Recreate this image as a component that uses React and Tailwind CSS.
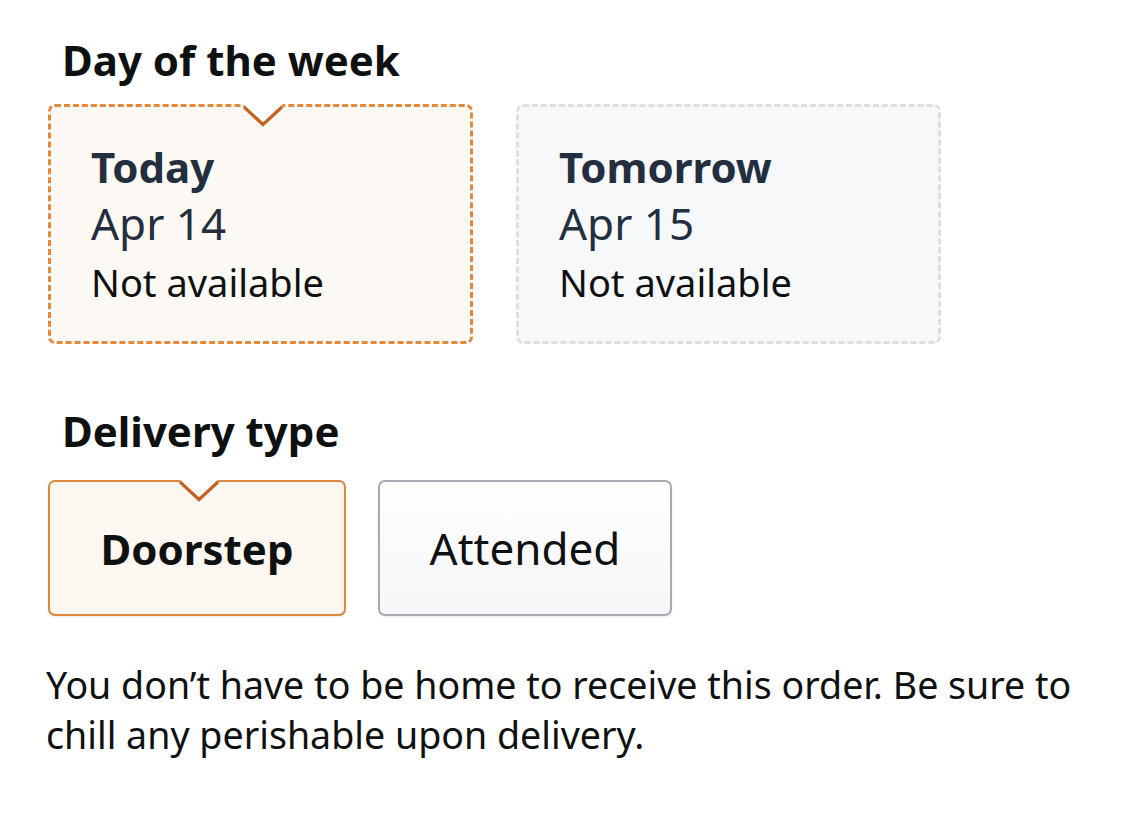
const Notch = ({ color = "#c4621f" }) => (
  <svg
    className="absolute left-[calc(50%+2px)] -translate-x-1/2 top-[-3px]"
    width="40"
    height="23"
    viewBox="0 0 40 23"
  >
    <polygon points="0,0 40,0 20,20" fill="#ffffff" />
    <polyline points="1,3 20,20.5 39,3" fill="none" stroke={color} strokeWidth="3.2" strokeLinejoin="miter" />
  </svg>
);

const DayCard = ({ selected, day, date, status }) => (
  <div
    className={`relative w-[425px] h-[240px] rounded-[7px] border-[3px] border-dashed pl-[40px] pt-[32px] ${
      selected ? "border-[#e3893b] bg-[#fcf8f3]" : "border-[#dcdfe2] bg-[#f7f8fa]"
    }`}
  >
    {selected && <Notch />}
    <div className="text-[42px] leading-[56px] font-bold text-[#232f3e]">{day}</div>
    <div className="text-[44px] leading-[56px] text-[#232f3e]">{date}</div>
    <div className="text-[38px] leading-[52px] mt-[5px] text-[#0f1111]">{status}</div>
  </div>
);

export default function App() {
  return (
    <div className="min-h-[825px] bg-white pt-[34px] pl-[46px] pr-[20px]" style={{ fontFamily: '"Noto Sans", sans-serif' }}>
      <h2 className="pl-[16px] text-[42px] leading-[52px] font-bold text-[#0f1111]">Day of the week</h2>
      <div className="mt-[18px] pl-[2px] flex gap-[43px]">
        <DayCard selected day="Today" date="Apr 14" status="Not available" />
        <DayCard day="Tomorrow" date="Apr 15" status="Not available" />
      </div>

      <h2 className="mt-[61px] pl-[16px] text-[42px] leading-[52px] font-bold text-[#0f1111]">Delivery type</h2>
      <div className="mt-[23px] pl-[2px] flex gap-[32px]">
        <button className="relative w-[298px] h-[136px] rounded-[7px] border-2 border-[#d9883f] bg-[#fcf7f1] flex items-center justify-center text-[42px] font-bold text-[#0f1111] shadow-[0_1px_2px_rgba(213,217,217,0.5)]">
          <Notch color="#c4621f" />
          Doorstep
        </button>
        <button className="w-[294px] h-[136px] rounded-[7px] border-2 border-[#a7abb0] bg-gradient-to-b from-white to-[#f5f6f8] flex items-center justify-center text-[44px] text-[#0f1111] shadow-[0_1px_2px_rgba(213,217,217,0.5)]">
          Attended
        </button>
      </div>

      <p className="mt-[44px] text-[37.6px] leading-[50px] text-[#0f1111]">
        You don’t have to be home to receive this order. Be sure to chill any perishable upon delivery.
      </p>
    </div>
  );
}
